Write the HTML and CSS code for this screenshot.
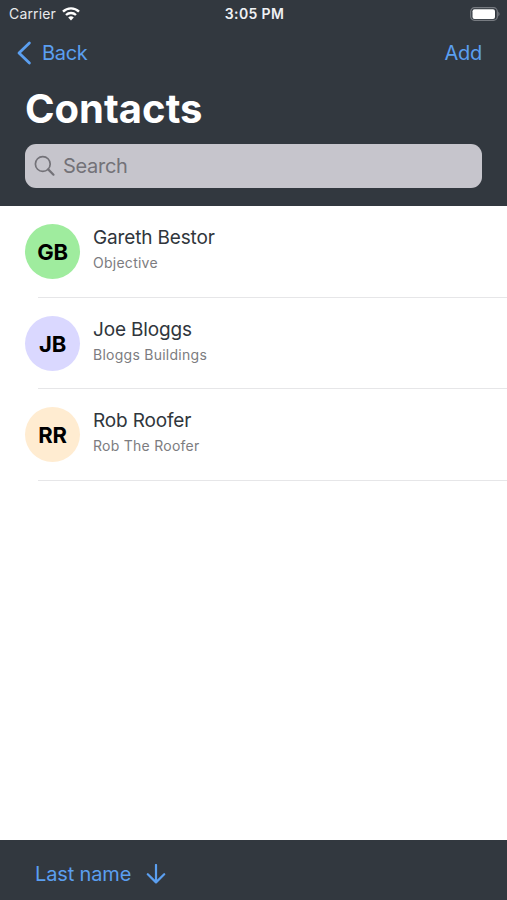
FILE: index.html
```html
<!DOCTYPE html>
<html lang="en">
<head>
  <meta charset="UTF-8">
  <title>Contacts</title>
  <meta name="viewport" content="width=device-width, initial-scale=1.0">
  <link rel="stylesheet" href="styles.css">
</head>
<body>
  <header class="header">
    <div class="status">
      <div class="carrier">
        <span>Carrier</span>
        <svg viewBox="0 0 18 14" width="18" height="14">
          <path d="M1 4.700a11.400 11.400 0 0 1 16 0" fill="none" stroke="#fff" stroke-width="2.400"/>
          <path d="M4 8a7.200 7.200 0 0 1 10 0" fill="none" stroke="#fff" stroke-width="2.300"/>
          <path d="M9 13.400 6.200 10.600a4 4 0 0 1 5.600 0z" fill="#fff"/>
        </svg>
      </div>
      <span class="time">3:05 PM</span>
      <svg class="battery" viewBox="0 0 30 14" width="30" height="14">
        <rect x=".7" y=".7" width="26.600" height="12.600" rx="3.800" fill="none" stroke="#777b81" stroke-width="1.200"/>
        <rect x="2.500" y="2.300" width="22.500" height="9.700" rx="2" fill="#fff"/>
        <path d="M28.300 4.500q2.600 2.500 0 5z" fill="#777b81"/>
      </svg>
    </div>

    <nav class="nav">
      <a class="back">
        <svg viewBox="0 0 16 24" width="16" height="24">
          <path d="M13.400 2 3 12l10.400 10" fill="none" stroke="#5b9ff0" stroke-width="2.800" stroke-linecap="round" stroke-linejoin="round"/>
        </svg>
        <span>Back</span>
      </a>
      <a class="add">Add</a>
    </nav>

    <h1>Contacts</h1>

    <div class="search">
      <svg viewBox="0 0 22 22" width="22" height="22">
        <circle cx="8.800" cy="9" r="7.400" fill="none" stroke="#737278" stroke-width="1.700"/>
        <path d="m14.200 14.400 5.300 5.300" stroke="#737278" stroke-width="2.200" stroke-linecap="round"/>
      </svg>
      <span>Search</span>
    </div>
  </header>

  <main class="list">
    <div class="contact">
      <div class="avatar green">GB</div>
      <div class="info">
        <div class="name">Gareth Bestor</div>
        <div class="company">Objective</div>
      </div>
    </div>
    <div class="contact">
      <div class="avatar purple">JB</div>
      <div class="info">
        <div class="name">Joe Bloggs</div>
        <div class="company">Bloggs Buildings</div>
      </div>
    </div>
    <div class="contact">
      <div class="avatar orange">RR</div>
      <div class="info">
        <div class="name">Rob Roofer</div>
        <div class="company">Rob The Roofer</div>
      </div>
    </div>
  </main>

  <footer class="toolbar">
    <span>Last name</span>
    <svg viewBox="0 0 20 20" width="20" height="20">
      <path d="M10 1v17M1.800 10.200 10 18.400l8.200-8.200" fill="none" stroke="#5b9ff0" stroke-width="2.200" stroke-linecap="round" stroke-linejoin="round"/>
    </svg>
  </footer>
</body>
</html>
```

FILE: styles.css
```css
* {
  box-sizing: border-box;
}
body {
  margin: 0;
  height: 900px;
  display: flex;
  flex-direction: column;
  background-color: #fff;
  font-family: Inter, sans-serif;
  color: #30363c;
  overflow: hidden;
}
.header {
  height: 206px;
  background-color: #32383f;
}
.status {
  height: 27px;
  padding: 0 7px 0 9px;
  display: grid;
  grid-template-columns: 1fr auto 1fr;
  align-items: center;
  color: #fff;
  font-size: 14px;
}
.carrier {
  display: flex;
  align-items: center;
  gap: 6px;
  color: #e9eaec;
  letter-spacing: 0.15px;
}
.time {
  font-weight: 600;
  letter-spacing: 0.35px;
  color: #eff1f4;
}
.battery {
  justify-self: end;
}
.nav {
  height: 51px;
  padding: 0 25px 0 16px;
  display: flex;
  align-items: center;
  justify-content: space-between;
  font-size: 20px;
  letter-spacing: -0.3px;
  color: #5b9ff0;
}
.back {
  display: flex;
  align-items: center;
  gap: 10px;
}
h1 {
  margin: 0 0 0 25px;
  height: 62px;
  line-height: 62px;
  font-size: 40px;
  font-weight: 700;
  color: #fff;
}
.search {
  height: 44px;
  margin: 4px 25px 0;
  padding: 0 9px;
  display: flex;
  align-items: center;
  gap: 7px;
  border-radius: 11px;
  background-color: #c6c5cc;
  color: #737278;
  font-size: 20px;
  letter-spacing: -0.3px;
}
.list {
  flex: 1;
}
.contact {
  height: 91.700px;
  padding-left: 25px;
  display: flex;
  background: linear-gradient(#e6e6e8, #e6e6e8) 38px 100% / 100% 1px no-repeat;
}
.avatar {
  width: 55px;
  height: 55px;
  margin: 18px 13px 0 0;
  border-radius: 50%;
  line-height: 56px;
  text-align: center;
  font-size: 22px;
  font-weight: 700;
  letter-spacing: -0.2px;
  color: #000;
}
.green {
  background-color: #9fec9e;
}
.purple {
  background-color: #dad8ff;
}
.orange {
  background-color: #ffecd1;
}
.info {
  padding-top: 18px;
}
.name {
  font-size: 19px;
  line-height: 27px;
  letter-spacing: -0.15px;
}
.company {
  margin-top: 2px;
  font-size: 14px;
  line-height: 20px;
  letter-spacing: 0.26px;
  color: #7c7c80;
}
.toolbar {
  height: 60px;
  padding: 7px 0 0 35px;
  display: flex;
  align-items: center;
  gap: 15px;
  background-color: #32383f;
  color: #5b9ff0;
  font-size: 20px;
  letter-spacing: -0.15px;
}
```
